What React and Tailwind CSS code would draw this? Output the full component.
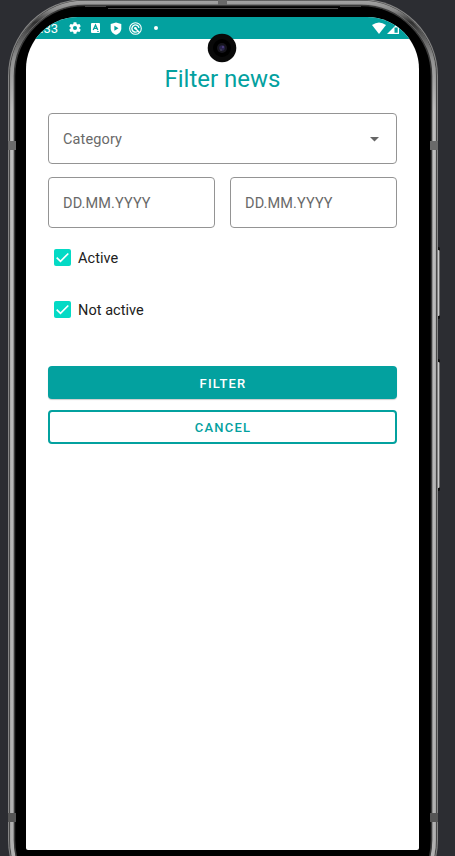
import React from "react";

function DeviceFrame() {
  return (
    <svg className="absolute inset-0" width="455" height="856" viewBox="0 0 455 856" fill="none" aria-hidden="true">
      <defs>
        <linearGradient id="metal" x1="0" y1="0" x2="0" y2="856" gradientUnits="userSpaceOnUse">
          <stop offset="0" stopColor="#a5a5a5" />
          <stop offset="0.012" stopColor="#8a8a8a" />
          <stop offset="0.026" stopColor="#303030" />
          <stop offset="0.04" stopColor="#555" />
          <stop offset="0.07" stopColor="#929292" />
          <stop offset="0.13" stopColor="#bdbdbd" />
          <stop offset="1" stopColor="#b0b0b0" />
        </linearGradient>
      </defs>
      {/* side keys */}
      <rect x="436" y="247" width="4" height="72" rx="1.5" fill="#111" />
      <rect x="437.5" y="250" width="2" height="66" rx="1" fill="#c9c9c9" />
      <rect x="436" y="359" width="4" height="132" rx="1.5" fill="#111" />
      <rect x="437.5" y="362" width="2" height="126" rx="1" fill="#c9c9c9" />
      {/* metal band */}
      <rect x="8" y="-1" width="430" height="918" rx="77" fill="#858585" />
      <rect x="9.5" y="0.5" width="427" height="915" rx="75.5" stroke="#4a4a4a" />
      <rect x="12" y="2.5" width="422" height="911" rx="73" stroke="url(#metal)" strokeWidth="3.5" />
      <rect x="14.5" y="5.5" width="417" height="905" rx="70.5" fill="#000" stroke="#3a3a3a" strokeWidth="1.5" />
      <path d="M108 8.5H338" stroke="#606060" strokeWidth="0.8" />
      <path d="M106 6.500H85M340 6.500H361" stroke="#555" strokeWidth="0.8" />
      {/* antenna breaks */}
      <rect x="218" y="0" width="9" height="5" fill="#686868" />
      <rect x="8" y="141" width="8" height="9" fill="#6a6a6a" />
      <rect x="430" y="141" width="8" height="9" fill="#6a6a6a" />
      <rect x="8" y="813" width="8" height="9" fill="#555" />
      <rect x="430" y="813" width="8" height="9" fill="#555" />
    </svg>
  );
}

function Camera() {
  return (
    <svg className="absolute left-[207px] top-[33px]" width="30" height="30" viewBox="0 0 30 30" aria-hidden="true">
      <circle cx="15" cy="15" r="14.3" fill="#090909" />
      <circle cx="15" cy="15" r="9" fill="#000" />
      <circle cx="15" cy="15" r="5" fill="#16151d" />
      <circle cx="15" cy="15" r="2.800" fill="#29254b" />
      <circle cx="16" cy="14" r="1.200" fill="#493b78" />
      <circle cx="14" cy="17" r="0.8" fill="#50505c" />
    </svg>
  );
}

function StatusBar() {
  return (
    <div className="flex h-[22px] items-center bg-[#03a19f] text-white">
      <span className="ml-[8px] w-[24px] text-right text-[13px] leading-none">:33</span>
      <svg className="ml-[10px]" width="14" height="14" viewBox="0 0 24 24" fill="currentColor">
        <path d="M19.430 12.980c.040-.320.070-.640.070-.980s-.030-.660-.070-.980l2.110-1.650c.190-.150.240-.420.120-.640l-2-3.460c-.120-.220-.390-.300-.610-.220l-2.490 1c-.520-.400-1.080-.730-1.690-.980l-.380-2.650A.488.488 0 0 0 14 2h-4c-.250 0-.460.180-.490.420l-.380 2.650c-.610.250-1.170.590-1.690.980l-2.490-1c-.230-.090-.490 0-.610.220l-2 3.460c-.130.220-.070.490.120.640l2.110 1.650c-.040.320-.070.650-.070.980s.030.660.070.980l-2.110 1.650c-.190.150-.240.420-.120.640l2 3.460c.120.220.390.300.610.220l2.490-1c.520.400 1.080.730 1.690.980l.380 2.650c.030.240.240.420.490.420h4c.250 0 .460-.180.490-.420l.380-2.650c.610-.250 1.170-.590 1.690-.980l2.490 1c.230.090.490 0 .610-.220l2-3.460c.120-.220.070-.490-.120-.640l-2.110-1.650zM12 15.500a3.500 3.500 0 1 1 0-7 3.500 3.500 0 0 1 0 7z" />
      </svg>
      <svg className="ml-[9px]" width="9" height="10" viewBox="0 0 9 10">
        <rect width="9" height="10" rx="1" fill="white" />
        <path d="M2.200 7L4.500 2L6.800 7M3.200 5.300H5.800" fill="none" stroke="#03a19f" strokeWidth="1.300" />
        <path d="M6 8.500H8" stroke="#03a19f" strokeWidth="0.7" />
      </svg>
      <svg className="ml-[10px]" width="12" height="13" viewBox="0 0 12 13">
        <path d="M6 .4L11.300 2V6.400C11.300 9.400 9 11.800 6 12.700C3 11.800.7 9.400.7 6.400V2Z" fill="white" />
        <path d="M4.400 3.700L8.500 6.200L4.400 8.700Z" fill="#03a19f" />
      </svg>
      <svg className="ml-[7px]" width="13" height="13" viewBox="0 0 13 13" fill="none" stroke="white">
        <circle cx="6.500" cy="6.500" r="5.800" strokeWidth="1.100" />
        <path d="M8.500 9.500A3.600 3.600 0 1 1 10 5.800M5.500 5.500L10.500 10.500" strokeWidth="1.400" />
        <circle cx="6.500" cy="6.300" r="1.200" fill="white" stroke="none" />
      </svg>
      <span className="ml-[12px] size-[4px] rounded-full bg-white" />
      <svg className="ml-auto" width="14" height="12" viewBox="0 0 14 12">
        <path d="M0 3Q7-2 14 3L7 12Z" fill="white" />
      </svg>
      <svg className="ml-[1px] mr-[20px]" width="12" height="12" viewBox="0 0 12 12">
        <path d="M0 12L12 0V12Z" fill="white" />
        <path d="M7.500 5.500H10.700V10.800H7.500Z" fill="#03a19f" />
      </svg>
    </div>
  );
}

function Field({ label, children }) {
  return (
    <div className="flex h-full min-w-0 flex-1 items-center justify-between rounded-[4px] border border-[#949494] pl-[14px] pr-[17px] text-[14.500px] tracking-[0.12px] text-[#696969]">
      <span className="pt-[2px] leading-5">{label}</span>
      {children}
    </div>
  );
}

function CheckOption({ label }) {
  return (
    <label className="flex h-[18px] items-center gap-[7px] text-[14.500px] tracking-[0.050px] text-[#202020]">
      <span className="grid size-[17px] place-items-center rounded-[2px] bg-[#04dac5]">
        <svg width="17" height="17" viewBox="0 0 17 17" fill="none">
          <path d="M2.700 8.600L6.500 12.300L14.300 4.500" stroke="white" strokeWidth="1.700" />
        </svg>
      </span>
      <span className="pt-[4px] leading-none">{label}</span>
    </label>
  );
}

export default function App() {
  return (
    <div className="relative h-[856px] w-[455px] overflow-hidden bg-[#2c2d32] pl-[26px] pt-[17px] font-[Roboto,sans-serif]">
      <DeviceFrame />
      <main className="relative h-[833px] w-[393px] overflow-hidden rounded-b-[2px] rounded-t-[52px] bg-white">
        <StatusBar />
        <div className="flex flex-col px-[22px]">
          <h1 className="mt-[24px] text-center text-[24px] font-normal leading-[32px] text-[#03a19f]">Filter news</h1>
          <div className="mt-[18px] flex h-[51px]">
            <Field label="Category">
              <svg className="mt-px" width="9" height="5" viewBox="0 0 9 5"><path d="M0 0H9L4.500 4.500Z" fill="#666" /></svg>
            </Field>
          </div>
          <div className="mt-[13px] flex h-[51px] gap-[15px]">
            <Field label="DD.MM.YYYY" />
            <Field label="DD.MM.YYYY" />
          </div>
          <div className="ml-[6px] mt-[20px] flex flex-col gap-[34px]">
            <CheckOption label="Active" />
            <CheckOption label="Not active" />
          </div>
          <button className="mt-[48px] h-[33px] rounded-[4px] bg-[#03a19f] pl-px pt-[2px] text-[13px] font-medium tracking-[1.200px] text-white shadow-[0_1px_1px_#0003]">FILTER</button>
          <button className="mt-[11px] h-[34px] rounded-[4px] border-2 border-[#03a19f] pl-px pt-px text-[13px] font-medium tracking-[1.200px] text-[#03a19f]">CANCEL</button>
        </div>
      </main>
      <Camera />
    </div>
  );
}
